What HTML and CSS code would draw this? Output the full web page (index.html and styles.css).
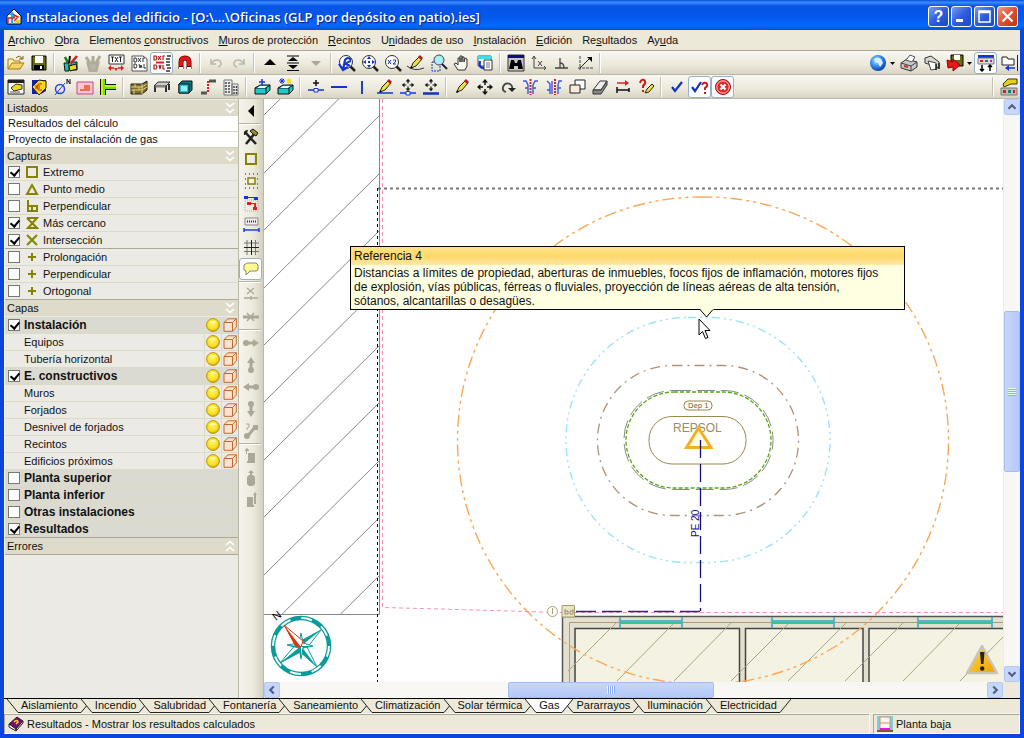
FILE: index.html
```html
<!DOCTYPE html>
<html lang="es">
  <head>
    <meta charset="utf-8" />
    <title>Instalaciones del edificio</title>
    <link rel="stylesheet" href="styles.css" />
  </head>
  <body>
    <svg class="sprite" aria-hidden="true">
      <defs>
        <radialGradient id="gBulb" cx="45%" cy="40%" r="60%">
          <stop offset="0" stop-color="#fff36a" />
          <stop offset="0.7" stop-color="#f8e01c" />
          <stop offset="1" stop-color="#d0a808" />
        </radialGradient>
        <radialGradient id="gGlobe" cx="40%" cy="35%" r="65%">
          <stop offset="0" stop-color="#bfe6ff" />
          <stop offset="0.5" stop-color="#3c96ec" />
          <stop offset="1" stop-color="#0a3fae" />
        </radialGradient>
        <linearGradient id="gWarn" x1="0" y1="0" x2="1" y2="1">
          <stop offset="0" stop-color="#ffd84a" />
          <stop offset="1" stop-color="#f0a000" />
        </linearGradient>
      </defs>
      <symbol id="bulb" viewBox="0 0 14 14">
        <circle cx="7" cy="7" r="6.4" fill="url(#gBulb)" stroke="#b89410" />
        <path d="M3 5Q7 1 11 5Q7 4 3 5" fill="#fffcc8" />
      </symbol>
      <symbol id="cube" viewBox="0 0 14 14">
        <path d="M1 4.500L5 .8H13.300V9L9.500 13.300H1Z" fill="#fbe3d4" />
        <path d="M1 4.500H9.500V13.300H1ZM1 4.500L5 .8H13.300L9.500 4.500M13.300 .8V9L9.500 13.300" fill="none" stroke="#c4692c" />
      </symbol>
      <symbol id="down2" viewBox="0 0 10 12">
        <path d="M1 1L5 4.500L9 1M1 7L5 10.500L9 7" fill="none" stroke="#fff" stroke-width="1.600" />
      </symbol>
      <symbol id="up2" viewBox="0 0 10 12">
        <path d="M1 5L5 1.500L9 5M1 11L5 7.500L9 11" fill="none" stroke="#fff" stroke-width="1.600" />
      </symbol>
      <symbol id="plus" viewBox="0 0 14 14">
        <path d="M7 3V11M3 7H11" stroke="#848400" stroke-width="2" />
      </symbol>
      <symbol id="pencil" viewBox="0 0 20 18">
        <path d="M5 14L7 9L13 3L16 5L10 12Z" fill="#f0e040" stroke="#222" />
        <path d="M12 3L14 1L17 4L15 6Z" fill="#c01818" />
        <path d="M4 15L5 12L7 14Z" fill="#000" />
      </symbol>
      <symbol id="lens" viewBox="0 0 20 18">
        <circle cx="9" cy="8" r="6.500" fill="#fff" stroke="#333" />
        <path d="M13.500 12.500L18 17" stroke="#222" stroke-width="2.500" />
      </symbol>
      <symbol id="cross" viewBox="0 0 20 18">
        <path d="M10 4V7M10 11V14M5 9H8M12 9H15" stroke="#111" stroke-width="1.500" />
        <path d="M10 1L13 4.500H7ZM10 17L13 13.500H7ZM2 9L5.500 6V12ZM18 9L14.500 6V12Z" fill="#111" />
      </symbol>
      <symbol id="arrow" viewBox="0 0 20 18">
        <path d="M5 9H13" stroke="#aaa896" stroke-width="3" />
        <path d="M12 5L18 9L12 13Z" fill="#aaa896" />
        <circle cx="5" cy="9" r="3" fill="#aaa896" />
      </symbol>
      <symbol id="caret" viewBox="0 0 8 18">
        <path d="M1 8H6L3.500 11Z" />
      </symbol>
    </svg>

    <header class="titlebar">
      <svg class="app-icon" viewBox="0 0 16 16">
        <path d="M1 7L8 0L15 7V15H1Z" fill="#fff" stroke="#000" />
        <path d="M5 14V6H3L6 2L9 6H7V14Z" fill="#20b0e0" />
        <path d="M2 14V9H8V6L12 8L8 12" fill="none" stroke="#e02020" stroke-width="1.500" />
        <path d="M9 11H14V14H9Z" fill="#f0d020" />
      </svg>
      <h1>Instalaciones del edificio - [O:\...\Oficinas (GLP por depósito en patio).ies]</h1>
      <div class="window-buttons">
        <button aria-label="Ayuda">?</button>
        <button aria-label="Minimizar"><svg viewBox="0 0 19 19"><path d="M4 12H11V15H4Z" fill="#fff" /></svg></button>
        <button aria-label="Maximizar"><svg viewBox="0 0 19 19"><path d="M4 4H15V15H4ZM4 5.500H15" fill="none" stroke="#fff" stroke-width="1.500" /></svg></button>
        <button class="close" aria-label="Cerrar"><svg viewBox="0 0 19 19"><path d="M4.500 4.500L14.500 14.500M14.500 4.500L4.500 14.500" stroke="#fff" stroke-width="2.200" /></svg></button>
      </div>
    </header>

    <nav class="menu">
      <a href="#"><u>A</u>rchivo</a>
      <a href="#"><u>O</u>bra</a>
      <a href="#">Elementos <u>c</u>onstructivos</a>
      <a href="#"><u>M</u>uros de protección</a>
      <a href="#"><u>R</u>ecintos</a>
      <a href="#">U<u>n</u>idades de uso</a>
      <a href="#"><u>I</u>nstalación</a>
      <a href="#"><u>E</u>dición</a>
      <a href="#">Re<u>s</u>ultados</a>
      <a href="#">Ay<u>u</u>da</a>
    </nav>

    <div class="toolbar">
      <button aria-label="Abrir"><svg viewBox="0 0 20 18"><path d="M2 15V5H7L8 7H14V9" fill="#fff0b0" stroke="#a87c10" /><path d="M2 15L6 9H18L14 15Z" fill="#f8d468" stroke="#a87c10" /><path d="M10 4Q14 0 16 5M17 2V5H13" fill="none" stroke="#805c10" /></svg></button>
      <button aria-label="Guardar"><svg viewBox="0 0 20 18"><path d="M3 2H17V16H3Z" fill="#6b6b10" stroke="#000" /><path d="M6 2H14V9H6Z" fill="#fff" /><path d="M5 11H15V16H5Z" fill="#000" /><path d="M11 12H13V15H11Z" fill="#fff" /></svg></button>
      <span class="sep"></span>
      <button aria-label="Recursos"><svg viewBox="0 0 20 18"><path d="M4 9H9V17H5ZM11 8H17V16H11Z" fill="#20c0b0" stroke="#111" /><path d="M8 9L5 3" stroke="#108020" stroke-width="2.500" /><path d="M9 9L10 2" stroke="#111" stroke-width="2" /><path d="M11 9L17 2" stroke="#d02020" stroke-width="2.500" /><path d="M9 12L16 10L17 15L10 17Z" fill="#e8d820" stroke="#111" /></svg></button>
      <button aria-label="Plantillas"><svg viewBox="0 0 20 18"><path d="M5 9H15L13 17H7ZM7 9L3 3M10 9L10 2M13 9L17 2" fill="#b8b4a4" stroke="#b0ac9c" stroke-width="3" /></svg></button>
      <button aria-label="Textos"><svg viewBox="0 0 20 18"><path d="M3 1H18V10H3Z" fill="#fff" stroke="#333" /><path d="M5 3H8M6.500 3V8M9 3L12 8M12 3L9 8M13 3H16M14.500 3V8" stroke="#222" /><path d="M4 14H8M12 14H16" stroke="#e02020" stroke-width="1.500" /><path d="M2 14L5 11V17ZM18 14L15 11V17ZM10 17L8 14H12Z" fill="#e02020" /></svg></button>
      <button aria-label="Plantilla DXF"><svg viewBox="0 0 20 18"><path d="M3 2H14L18 5V17H3Z" fill="#fff" stroke="#555" /><path d="M5 4V8H7L8 6L7 4ZM9 4L12 8M12 4L9 8M14 8V4H16M5 10V14H7L8 12L7 10ZM10 10L11 14L12 11L13 14M15 10V14H17" fill="none" stroke="#333" /></svg></button>
      <button class="pressed" aria-label="Capas DXF"><svg viewBox="0 0 20 18"><path d="M2 2V6H4L5 4L4 2ZM6 2L9 6M9 2L6 6M11 6V2H13M2 11V15H4L5 13L4 11ZM7 11L8 15L9 11M11 11V15H13" fill="none" stroke="#a02020" stroke-width="1.200" /><path d="M4 8.500H12" stroke="#e02020" stroke-width="2" /><path d="M15 2H19M14 5H18M14 8H18M14 11H18M15 14H19M14 17H18" stroke="#333" stroke-width="1.500" /></svg></button>
      <button aria-label="Imán"><svg viewBox="0 0 20 18"><path d="M6 15V8Q6 4 10 4Q14 4 14 8V15" fill="none" stroke="#600" stroke-width="5" /><path d="M6 12V8Q6 4 10 4Q14 4 14 8V12" fill="none" stroke="#e01818" stroke-width="3.500" /><path d="M4 13H8V15H4ZM12 13H16V15H12Z" fill="#fff" /></svg></button>
      <span class="sep"></span>
      <button aria-label="Deshacer"><svg viewBox="0 0 20 18"><path d="M5 5V10H10M5 10Q9 4 14 7Q17 11 12 13" fill="none" stroke="#bbb8a8" stroke-width="1.500" /></svg></button>
      <button aria-label="Rehacer"><svg viewBox="0 0 20 18"><path d="M15 5V10H10M15 10Q11 4 6 7Q3 11 8 13" fill="none" stroke="#bbb8a8" stroke-width="1.500" /></svg></button>
      <span class="sep"></span>
      <button aria-label="Subir planta"><svg viewBox="0 0 20 18"><path d="M10 5L16 11H4Z" /></svg></button>
      <button aria-label="Ir a planta"><svg viewBox="0 0 20 18"><path d="M4 2H16M4 9H16M4 16.500H16" stroke="#000" stroke-width="1.200" /><path d="M10 3L15 7H5ZM10 15L15 11H5Z" /></svg></button>
      <button aria-label="Bajar planta"><svg viewBox="0 0 20 18"><path d="M5 7H15L10 12Z" fill="#aaa896" /></svg></button>
      <span class="sep"></span>
      <button aria-label="Redibujar"><svg viewBox="0 0 20 18"><use href="#lens" /><path d="M6 16L8 6Q11 2 14 6M14 7Q10 8 9 10L13 12M2 10L6 16L11 13" fill="none" stroke="#1034d0" stroke-width="2.200" /></svg></button>
      <button aria-label="Ver todo"><svg viewBox="0 0 20 18"><use href="#lens" /><path d="M9 2L11 5H7ZM9 14L11 11H7ZM3 8L6 6V10ZM15 8L12 6V10ZM8 7H10V9H8Z" fill="#1034d0" /></svg></button>
      <button aria-label="Ampliar"><svg viewBox="0 0 20 18"><use href="#lens" /><path d="M5 6L8 10M8 6L5 10M10 6H12.500V8L10 10H13" fill="none" stroke="#1034d0" /></svg></button>
      <button aria-label="Dibujar"><svg viewBox="0 0 20 18"><use href="#pencil" /><path d="M1 12Q8 18 18 14" fill="none" stroke="#333" /></svg></button>
      <button aria-label="Ventana"><svg viewBox="0 0 20 18"><path d="M3 8H11V17H3Z" fill="none" stroke="#1034d0" stroke-dasharray="2 1" /><circle cx="10" cy="6" r="5" fill="#a8f0f8" stroke="#444" /><path d="M13 10L18 15" stroke="#222" stroke-width="2" /></svg></button>
      <button aria-label="Desplazar"><svg viewBox="0 0 20 18"><path d="M6 16L2 10L4 9L6 11V4H8V8V2H10V8V3H12V8L13 4L15 5V12L13 16Z" fill="#f8f6f0" stroke="#333" /></svg></button>
      <button aria-label="Vista anterior"><svg viewBox="0 0 20 18"><path d="M3 2H16V12H3Z" fill="#fff" stroke="#555" /><path d="M3 2H16V5H3Z" fill="#48d8e8" /><path d="M9 6H17V16H9Z" fill="#fff" stroke="#333" /><path d="M11 9H15M11 11H15M11 13H15" stroke="#777" /><path d="M5 7Q3 14 9 14" fill="none" stroke="#1034d0" stroke-width="2.500" /></svg></button>
      <span class="sep"></span>
      <button aria-label="Buscar"><svg viewBox="0 0 20 18"><path d="M2 1H18V17H2Z" fill="#c8c8c8" stroke="#333" /><path d="M2 1H18V4H2Z" fill="#101078" /><path d="M5 6H8L9 9H11L12 6H15L17 15H12V12H8V15H3Z" /></svg></button>
      <button aria-label="Coordenadas"><svg viewBox="0 0 20 18"><path d="M5 3V14H17M3 5L5 2L7 5M15 12L17 14L15 16" fill="none" stroke="#444" /><path d="M9 7L13 12M13 7L9 12" stroke="#444" /></svg></button>
      <button aria-label="Ángulo"><svg viewBox="0 0 20 18"><path d="M3 14H16M8 14V4M8 9Q12 9 12 14" fill="none" stroke="#444" stroke-width="1.300" /></svg></button>
      <button aria-label="Polares"><svg viewBox="0 0 20 18"><path d="M5 2V16M3 14H18" stroke="#444" stroke-dasharray="3 1" /><path d="M5 14L15 4" stroke="#222" /><path d="M12 3H17V8Z" /></svg></button>
      <span class="sep"></span>
      <span class="fill"></span>
      <button aria-label="Web"><svg viewBox="0 0 20 18"><circle cx="10" cy="9" r="8" fill="url(#gGlobe)" /><path d="M6 5Q10 2 13 5L15 9L12 13L10 9L7 8Z" fill="#d4f0ff" /></svg></button>
      <button class="drop" aria-label="Más web"><svg viewBox="0 0 8 18"><use href="#caret" /></svg></button>
      <button aria-label="Imprimir"><svg viewBox="0 0 20 18"><path d="M2 9L8 5L18 8V13L12 17L2 14Z" fill="#c8c8c4" stroke="#333" /><path d="M7 6L11 1L16 3L13 8Z" fill="#fff" stroke="#555" /><path d="M2 9L12 12L18 8M12 12V17" fill="none" stroke="#444" /><path d="M5 12L9 13" stroke="#c03030" stroke-width="2" /></svg></button>
      <button aria-label="Imprimir planos"><svg viewBox="0 0 20 18"><path d="M3 4L9 2L17 8V14L12 12L3 9Z" fill="#d8d8d0" stroke="#333" /><path d="M6 7L14 9L15 15L9 16Z" fill="#fff" stroke="#444" /><path d="M14 10V16M17 9V15" stroke="#222" stroke-width="1.500" /></svg></button>
      <button aria-label="Exportar"><svg viewBox="0 0 20 18"><path d="M6 1H18V12H6Z" fill="#6b6b10" stroke="#000" /><path d="M9 1H15V6H9Z" fill="#fff" /><path d="M2 6L8 8V5L15 11L8 17V13L3 14Z" fill="#e81818" stroke="#900" /></svg></button>
      <button class="drop" aria-label="Más exportar"><svg viewBox="0 0 8 18"><use href="#caret" /></svg></button>
      <button class="pressed" aria-label="Barras"><svg viewBox="0 0 20 18"><path d="M2 1H18V4H2Z" fill="#1034d0" /><path d="M2 4H18V10H2Z" fill="#ddd" stroke="#777" /><path d="M4 6H7V8H4Z" fill="#d02020" /><path d="M9 6H12V8H9Z" fill="#108070" /><path d="M14 6H16V8H14Z" fill="#c020c0" /><path d="M6 11V17M4 15L6 17L8 15M14 17V11M12 13L14 11L16 13" fill="none" stroke="#000" stroke-width="1.500" /></svg></button>
      <button aria-label="Restaurar"><svg viewBox="0 0 20 18"><path d="M3 3H8L9 5H15V11H3Z" fill="#fff" stroke="#222" /><path d="M18.500 1V17" stroke="#222" /><path d="M16 14H8" stroke="#1034e0" stroke-width="1.500" /><path d="M6 14L10 11V17Z" fill="#1034e0" /></svg></button>
    </div>

    <div class="toolbar">
      <button aria-label="Datos generales"><svg viewBox="0 0 20 18"><path d="M2 2H18V16H2Z" fill="#fff" stroke="#222" /><path d="M2 2H18V5H2Z" fill="#222" /><path d="M5 10L10 6L16 7V11L8 13Z" fill="#f0d820" stroke="#333" /><path d="M4 14H14" stroke="#555" /></svg></button>
      <button aria-label="Precios"><svg viewBox="0 0 20 18"><path d="M3 2H17V13L12 16H3Z" fill="#1020b0" /><path d="M3 9L10 2L17 3V10L10 17Z" fill="#f4d818" stroke="#222" /><path d="M13 6Q8 5 8 9Q8 13 13 12M6 8H11M6 10H11" fill="none" stroke="#d02020" /></svg></button>
      <button aria-label="Diámetros"><svg viewBox="0 0 20 18"><circle cx="8" cy="11" r="4.500" fill="none" stroke="#2040e0" stroke-width="1.400" /><path d="M3 17L13 5" stroke="#2040e0" /><path d="M15 6V1L18 6V1" fill="none" stroke="#111" /></svg></button>
      <button aria-label="Planta"><svg viewBox="0 0 20 18"><path d="M2 4H18V16H2Z" fill="#f8c8d8" stroke="#c04880" /><path d="M9 7H15V13H5V11H9Z" fill="#f0704c" /></svg></button>
      <button aria-label="Tuberías"><svg viewBox="0 0 20 18"><path d="M5 1V17M7 9H18" stroke="#111" stroke-width="6" /><path d="M5 1V17M7 9H18" stroke="#70e010" stroke-width="4" /><path d="M4 1V17M7 8H18" stroke="#e8f020" stroke-width="1.500" /></svg></button>
      <span class="sep"></span>
      <button aria-label="Muros"><svg viewBox="0 0 20 18"><path d="M2 6H13L18 3V12L13 16H2Z" fill="#807028" stroke="#222" /><path d="M2 9H13L18 6M2 12H13L18 9M6 6V9M10 9V12M5 12V16M13 6V16" fill="none" stroke="#e0d080" /></svg></button>
      <button aria-label="Forjados"><svg viewBox="0 0 20 18"><path d="M2 8L6 4H18L14 8Z" fill="#ccc" stroke="#333" /><path d="M3 8V14M14 8V14M17 6V12" stroke="#333" stroke-width="2" /><path d="M3 9H14" stroke="#777" /></svg></button>
      <button aria-label="Huecos"><svg viewBox="0 0 20 18"><path d="M4 6L7 3H17V12L14 15H4Z" fill="#007888" stroke="#111" /><path d="M4 6H14V15H4Z" fill="#20c0d0" stroke="#111" /><path d="M6 8H12V13H6Z" fill="#90f0f8" /></svg></button>
      <button aria-label="Desniveles"><svg viewBox="0 0 20 18"><path d="M3 15H9M11 3H18" stroke="#555" stroke-width="3" /><path d="M10 3V15" stroke="#e02020" stroke-width="2" stroke-dasharray="2 1" /></svg></button>
      <button aria-label="Edificios"><svg viewBox="0 0 20 18"><path d="M3 2H11V17H3ZM11 6H17V17H11Z" fill="#eee" stroke="#777" /><path d="M5 4V16M8 4V16M13 8V16M15.500 8V16" stroke="#444" stroke-dasharray="2 1" stroke-width="1.500" /></svg></button>
      <span class="sep"></span>
      <button aria-label="Nuevo equipo"><svg viewBox="0 0 20 18"><path d="M3 10L8 7H18V12L14 16H3Z" fill="#20c8c8" stroke="#111" /><path d="M3 10H14L18 7M14 10V16" fill="none" stroke="#111" /><path d="M5 10L8 8H15L13 10Z" fill="#fff" /><path d="M10 1V7M7 4H13" stroke="#1034e0" stroke-width="1.500" /></svg></button>
      <button aria-label="Nuevo depósito"><svg viewBox="0 0 20 18"><path d="M3 10L8 7H18V12L14 16H3Z" fill="#20c8c8" stroke="#111" /><path d="M3 10H14L18 7M14 10V16" fill="none" stroke="#111" /><path d="M5 10L8 8H15L13 10Z" fill="#fff" /><path d="M4 3H10M7 0V6M5 1L9 5M9 1L5 5" stroke="#1034e0" /><circle cx="14" cy="3" r="2.500" fill="#f4e020" /></svg></button>
      <span class="sep"></span>
      <button aria-label="Nuevo punto"><svg viewBox="0 0 20 18"><path d="M2 12H18" stroke="#1034e0" stroke-width="1.500" /><path d="M8 10.500H12V14H8Z" fill="#fff" stroke="#1034e0" /><path d="M10 2V8M7 5H13" stroke="#111" stroke-width="1.500" /></svg></button>
      <button aria-label="Tubería horizontal"><svg viewBox="0 0 20 18"><path d="M2 9H18" stroke="#1034e0" stroke-width="2" /></svg></button>
      <button aria-label="Tubería vertical"><svg viewBox="0 0 20 18"><path d="M10 3V16" stroke="#2440c0" stroke-width="2" /></svg></button>
      <button aria-label="Editar tubería"><svg viewBox="0 0 20 18"><use href="#pencil" /><path d="M2 15H18" stroke="#1034e0" stroke-width="1.500" /></svg></button>
      <button aria-label="Mover punto"><svg viewBox="0 0 20 18"><use href="#cross" height="14" /><path d="M2 15H18" stroke="#1034e0" stroke-width="1.500" /><path d="M8 13.500H12V17H8Z" fill="#fff" stroke="#1034e0" /></svg></button>
      <button aria-label="Mover tubería"><svg viewBox="0 0 20 18"><use href="#cross" height="14" /><path d="M2 15.500H18" stroke="#1034c0" stroke-width="2.500" /></svg></button>
      <span class="sep"></span>
      <button aria-label="Editar"><svg viewBox="0 0 20 18"><use href="#pencil" /></svg></button>
      <button aria-label="Mover"><svg viewBox="0 0 20 18"><use href="#cross" /></svg></button>
      <button aria-label="Girar"><svg viewBox="0 0 20 18"><path d="M8 14Q4 13 5 9Q7 4 12 6Q15 8 14 11" fill="none" stroke="#444" stroke-width="1.800" /><path d="M10 10H18L14 14Z" fill="#222" /></svg></button>
      <button aria-label="Simetría copia"><svg viewBox="0 0 20 18"><path d="M9.500 1V17" stroke="#e02020" stroke-width="2" stroke-dasharray="2 1" /><path d="M2 3H5L7 7V16M4 10H7M17 3H14L12 7V16M15 10H12" fill="none" stroke="#3858e0" stroke-width="1.400" /></svg></button>
      <button aria-label="Simetría mover"><svg viewBox="0 0 20 18"><path d="M11 1V17" stroke="#e02020" stroke-width="2" stroke-dasharray="2 1" /><path d="M3 3L6 6V16M3 12H6M18 3H15L14 7V16M17 10H14M8 3V16" fill="none" stroke="#3858e0" stroke-width="1.400" /></svg></button>
      <button aria-label="Copiar"><svg viewBox="0 0 20 18"><path d="M8 2H18V11H8Z" fill="#fff" stroke="#222" /><path d="M3 7H13V15H3Z" fill="#fce8dc" stroke="#222" /></svg></button>
      <button aria-label="Borrar"><svg viewBox="0 0 20 18"><path d="M3 12L10 3H17L11 12Z" fill="#eee" stroke="#333" /><path d="M3 12L11 12L17 3V7L11 16H3Z" fill="#888" stroke="#333" /></svg></button>
      <button aria-label="Medir"><svg viewBox="0 0 20 18"><path d="M4 5H13" stroke="#e02020" stroke-width="1.500" /><path d="M12 2L16 5L12 8Z" fill="#e02020" /><path d="M4 12H16M4 9V15M16 10V14" stroke="#111" stroke-width="1.500" /></svg></button>
      <button aria-label="Información"><svg viewBox="0 0 20 18"><path d="M4 5Q5 1 8 2Q11 4 7 8V10M7 12V14" fill="none" stroke="#d01818" stroke-width="2" /><path d="M9 15L11 11L16 6L18 8L13 14Z" fill="#f0e040" stroke="#222" /></svg></button>
      <span class="sep"></span>
      <button aria-label="Calcular"><svg viewBox="0 0 20 18"><path d="M5 9L8 13L15 4" fill="none" stroke="#1034c0" stroke-width="2.200" /></svg></button>
      <button class="pressed" aria-label="Resultados"><svg viewBox="0 0 20 18"><path d="M2 9L5 13L11 4" fill="none" stroke="#1034c0" stroke-width="2.200" /><path d="M12 7Q13 4 16 5Q19 7 15 10V12M15 14V16" fill="none" stroke="#d01818" stroke-width="2" /></svg></button>
      <button class="pressed" aria-label="Errores"><svg viewBox="0 0 20 18"><circle cx="10" cy="9" r="7.500" fill="#e02828" stroke="#b00808" /><circle cx="10" cy="9" r="6.200" fill="none" stroke="#fff" stroke-width=".8" /><path d="M7.500 6.500L12.500 11.500M12.500 6.500L7.500 11.500" stroke="#fff" stroke-width="2.200" /></svg></button>
      <span class="fill"></span>
      <span class="sep"></span>
      <button aria-label="Configurar barra"><svg viewBox="0 0 20 18"><path d="M4 6L9 1H18V6H12L5 9Z" fill="#e8d010" stroke="#333" /><path d="M2 10H18V17H2Z" fill="#bbb" stroke="#777" /><path d="M4 12H7V15H4Z" fill="#d02020" /><path d="M9 12H12V15H9Z" fill="#108070" /><path d="M14 12H16V15H14Z" fill="#c02020" /></svg></button>
    </div>

    <main>
      <aside class="sidebar">
        <h2>Listados <svg class="chevron"><use href="#down2" /></svg></h2>
        <div class="reports">
          <a href="#">Resultados del cálculo</a>
          <a href="#">Proyecto de instalación de gas</a>
        </div>

        <h2>Capturas <svg class="chevron"><use href="#down2" /></svg></h2>
        <div class="rows">
          <label class="row"><input type="checkbox" checked /><svg class="snap" viewBox="0 0 14 14"><path d="M2 2H12V12H2Z" /></svg>Extremo</label>
          <label class="row"><input type="checkbox" /><svg class="snap" viewBox="0 0 14 14"><path d="M7 3L12 12H2Z" /></svg>Punto medio</label>
          <label class="row"><input type="checkbox" /><svg class="snap" viewBox="0 0 14 14"><path d="M3 1V12H12V7H3M7 7V12" /></svg>Perpendicular</label>
          <label class="row"><input type="checkbox" checked /><svg class="snap" viewBox="0 0 14 14"><path d="M2 2H12L3 12H12L2 2" /></svg>Más cercano</label>
          <label class="row last"><input type="checkbox" checked /><svg class="snap" viewBox="0 0 14 14"><path d="M2 2L12 12M12 2L2 12" /></svg>Intersección</label>
          <label class="row"><input type="checkbox" /><svg class="snap"><use href="#plus" /></svg>Prolongación</label>
          <label class="row"><input type="checkbox" /><svg class="snap"><use href="#plus" /></svg>Perpendicular</label>
          <label class="row last"><input type="checkbox" /><svg class="snap"><use href="#plus" /></svg>Ortogonal</label>
        </div>

        <h2>Capas <svg class="chevron"><use href="#down2" /></svg></h2>
        <div class="rows layers">
          <div class="row group"><label><input type="checkbox" checked />Instalación</label><button aria-label="Visible"><svg><use href="#bulb" /></svg></button><button aria-label="3D"><svg><use href="#cube" /></svg></button></div>
          <div class="row"><span>Equipos</span><button aria-label="Visible"><svg><use href="#bulb" /></svg></button><button aria-label="3D"><svg><use href="#cube" /></svg></button></div>
          <div class="row"><span>Tubería horizontal</span><button aria-label="Visible"><svg><use href="#bulb" /></svg></button><button aria-label="3D"><svg><use href="#cube" /></svg></button></div>
          <div class="row group"><label><input type="checkbox" checked />E. constructivos</label><button aria-label="Visible"><svg><use href="#bulb" /></svg></button><button aria-label="3D"><svg><use href="#cube" /></svg></button></div>
          <div class="row"><span>Muros</span><button aria-label="Visible"><svg><use href="#bulb" /></svg></button><button aria-label="3D"><svg><use href="#cube" /></svg></button></div>
          <div class="row"><span>Forjados</span><button aria-label="Visible"><svg><use href="#bulb" /></svg></button><button aria-label="3D"><svg><use href="#cube" /></svg></button></div>
          <div class="row"><span>Desnivel de forjados</span><button aria-label="Visible"><svg><use href="#bulb" /></svg></button><button aria-label="3D"><svg><use href="#cube" /></svg></button></div>
          <div class="row"><span>Recintos</span><button aria-label="Visible"><svg><use href="#bulb" /></svg></button><button aria-label="3D"><svg><use href="#cube" /></svg></button></div>
          <div class="row"><span>Edificios próximos</span><button aria-label="Visible"><svg><use href="#bulb" /></svg></button><button aria-label="3D"><svg><use href="#cube" /></svg></button></div>
          <div class="row group"><label><input type="checkbox" />Planta superior</label></div>
          <div class="row group"><label><input type="checkbox" />Planta inferior</label></div>
          <div class="row group"><label><input type="checkbox" />Otras instalaciones</label></div>
          <div class="row group last"><label><input type="checkbox" checked />Resultados</label></div>
        </div>

        <h2 class="closed">Errores <svg class="chevron"><use href="#up2" /></svg></h2>
      </aside>

      <div class="side-tools">
        <button aria-label="Ocultar panel"><svg viewBox="0 0 20 18"><path d="M13 3V15L7 9Z" /></svg></button>
        <hr />
        <button aria-label="Opciones"><svg viewBox="0 0 20 18"><path d="M5 16L14 5M4 4L15 16" stroke="#222" stroke-width="2.500" /><path d="M9 3L12 1L17 5L15 8L12 6Z" fill="#989020" stroke="#111" /><path d="M3 7Q2 2 7 2L6 5L4 7Z" fill="#222" /></svg></button>
        <button aria-label="Capturas"><svg viewBox="0 0 20 18"><path d="M5 4H15V14H5Z" fill="none" stroke="#848400" stroke-width="2" /></svg></button>
        <button aria-label="Rejilla de captura"><svg viewBox="0 0 20 18"><path d="M4 2H18M4 7H18M4 12H18M4 16H18" stroke="#4050e8" stroke-width="1.500" stroke-dasharray="1 3" /><path d="M7 6H14V12H7Z" fill="#f4f2e4" stroke="#848400" stroke-width="1.500" /></svg></button>
        <button aria-label="Referencias"><svg viewBox="0 0 20 18"><path d="M4 6H17V17H4Z" fill="none" stroke="#aaa" stroke-dasharray="1 1" /><path d="M3 2H7V5H3ZM13 3H17V6H13ZM7 3H13V4H7Z" fill="#2030e0" /><path d="M6 8H10V11H6ZM12 13H16V16H12ZM10 9H15V13H13V10H10Z" fill="#e02020" /></svg></button>
        <button aria-label="Cotas"><svg viewBox="0 0 20 18"><path d="M4 2H17V9H4Z" fill="#eee" stroke="#888" /><path d="M6 5.500H15" stroke="#333" stroke-width="2" stroke-dasharray="1 1" /><path d="M3 14H18M3 12V16M18 12V16" stroke="#2040e0" stroke-width="1.500" /></svg></button>
        <button aria-label="Rejilla"><svg viewBox="0 0 20 18"><path d="M6 2V17M14.500 2V17M3 5H18M3 13.500H18" stroke="#777" /><path d="M10.500 2V17M3 9.500H18" stroke="#222" /></svg></button>
        <button class="pressed" aria-label="Ayudas"><svg viewBox="0 0 20 18"><path d="M6 3H15L17 5V10L15 11H9L5 15V11L3 10V5Z" fill="#fffc98" stroke="#888860" /></svg></button>
        <hr />
        <button aria-label="Dividir"><svg viewBox="0 0 20 18"><path d="M6 2L13 8M13 2L6 8M3 12H17M10 10V14" stroke="#aaa896" stroke-width="1.300" /></svg></button>
        <button aria-label="Unir"><svg viewBox="0 0 20 18"><path d="M2 9H18" stroke="#aaa896" stroke-width="3" /><path d="M6 5L13 13M13 5L6 13" stroke="#aaa896" stroke-width="1.500" /></svg></button>
        <hr />
        <button aria-label="Derecha"><svg viewBox="0 0 20 18"><use href="#arrow" /></svg></button>
        <button aria-label="Arriba"><svg class="turn-up" viewBox="0 0 20 18"><use href="#arrow" /></svg></button>
        <button aria-label="Izquierda"><svg class="turn-left" viewBox="0 0 20 18"><use href="#arrow" /></svg></button>
        <button aria-label="Abajo"><svg class="turn-down" viewBox="0 0 20 18"><use href="#arrow" /></svg></button>
        <button aria-label="Conectar"><svg viewBox="0 0 20 18"><path d="M6 15L14 5" stroke="#aaa896" stroke-width="3" /><circle cx="6" cy="14" r="3" fill="#aaa896" /><path d="M12 3H17V8H12Z" fill="#aaa896" /><path d="M5 2H8V5L6 6V8" fill="none" stroke="#aaa896" /></svg></button>
        <hr />
        <button aria-label="Subir tramo"><svg viewBox="0 0 20 18"><path d="M7 5H14V15H6V13H7ZM4 2L6 0L8 2V3H6V6H5V3H4Z" fill="#aaa896" /></svg></button>
        <button aria-label="Tramo central"><svg viewBox="0 0 20 18"><path d="M6 7L8 5H12L14 7V14L12 16H8L6 14ZM9 5V3H7L10 0L13 3H11V5Z" fill="#aaa896" /></svg></button>
        <button aria-label="Bajar tramo"><svg viewBox="0 0 20 18"><path d="M6 5H12V13H13V15H6ZM12 3L14 0L16 3H15V12H13V3Z" fill="#aaa896" /></svg></button>
      </div>

      <div class="view">
        <div class="drawing">
          <svg class="plan" viewBox="264 99 740 583" preserveAspectRatio="xMinYMin slice">
            <clipPath id="plot"><path d="M264 99H379V614H264Z" /></clipPath>
            <g class="line hatch" clip-path="url(#plot)">
              <path d="M264 115L380 0M264 173L380 58M264 230L380 115M264 288L380 173M264 345L380 230M264 402L380 287M264 460L380 345M264 517L380 402M264 575L380 460M264 632L380 517M264 690L380 575" />
            </g>
            <path class="line" d="M379.500 99V614.500H264" stroke="#888" />
            <path class="line" d="M377.500 188V682" stroke="#000" stroke-dasharray="3 3" />
            <path class="line" d="M378 188.500H1004" stroke="#777" stroke-width="2" stroke-dasharray="3 3" />

            <!-- edificio -->
            <path d="M562 616H1004V682H562Z" fill="#e4e0d0" />
            <path class="line" d="M1004 616.500H562.500V682" stroke="#555" stroke-width="1.500" />
            <path class="line" d="M1004 622.500H569.500V682" stroke="#b09878" />
            <g fill="#f4f2e2" stroke="#444" stroke-width="1.500">
              <path d="M575 690V628.500H739.500V690" />
              <path d="M745.500 690V628.500H863V690" />
              <path d="M869 690V628.500H1010V690" />
            </g>
            <path class="line" d="M568 671L616 623M617 681L674 623M674 681L731 623M731 681L789 623M788 681L846 623M845 681L903 623M903 681L960 623M960 681L1004 636" stroke="#a8a880" />
            <g stroke="#60b0c8" stroke-width="2">
              <path d="M620 617V628M682 617V628M772 617V628M834 617V628M918 617V628M992 617V628" />
              <path d="M620 621H682M772 621H834M918 621H992" />
              <path d="M620 623H682M772 623H834M918 623H992" stroke="#30c898" />
            </g>

            <!-- distancias de seguridad -->
            <rect class="line" x="457.500" y="197" width="491" height="487" rx="243" stroke="#f9a858" stroke-width="1.400" stroke-dasharray="12 4 3 4 3 4" />
            <rect class="line" x="566" y="317.500" width="264" height="245" rx="122" stroke="#9ae4fa" stroke-width="1.400" stroke-dasharray="8 4 2 4 2 4" />
            <rect class="line" x="597.500" y="365.500" width="201" height="150" rx="75" stroke="#b09078" stroke-width="1.300" stroke-dasharray="10 5 2 5" />
            <rect class="line" x="624" y="390.500" width="149" height="99" rx="49" stroke="#888" stroke-dasharray="18 6" />
            <rect class="line" x="626" y="392" width="145" height="96" rx="48" stroke="#58a818" stroke-width="1.300" stroke-dasharray="4 2" />
            <rect class="line" x="649" y="416.500" width="97" height="47.500" rx="23" stroke="#9a8850" />
            <rect class="line" x="684" y="401" width="28" height="9" rx="4" stroke="#9a8850" />
            <text x="688" y="408" class="tank-id">Dep 1</text>
            <text x="673" y="432" class="tank-name">REPSOL</text>
            <path class="line" d="M382.500 99V607.500L440 609L560 612.500H1004" stroke="#ff90b4" stroke-dasharray="4 3" />
            <path class="line" d="M576 611.500H700.500" stroke="#28288c" stroke-width="1.500" stroke-dasharray="20 6" />
            <path d="M698.500 428L711 447.500H686.500Z" fill="#fffbdc" stroke="#f4b020" stroke-width="3" />
            <path class="line" d="M700.500 440V611" stroke="#10107c" stroke-width="1.300" stroke-dasharray="18 6" />
            <text class="pipe" transform="translate(699 537) rotate(-90)">PE 20</text>
            <circle cx="552.500" cy="611.500" r="5" fill="#fff" stroke="#b0a078" />
            <path d="M552.500 608V614" stroke="#b0a078" />
            <path d="M562 605.500H574.500V617H562Z" fill="#e8e4c4" stroke="#a89c70" />
            <path d="M565 609V614H568V611H565M573 609V614H570V611H573" fill="none" stroke="#98906c" />

            <!-- rosa de los vientos -->
            <g transform="translate(301 646)">
              <circle r="28" fill="none" stroke="#0a9c9c" stroke-width="4.500" />
              <circle r="28" fill="none" stroke="#fff" stroke-width="2" stroke-dasharray="11 11" />
              <path d="M20 -16L5 3L-21 17L-4 -3Z" fill="#fff" stroke="#0a9c9c" />
              <path d="M20 -16L0 0L-4 -3ZM-21 17L0 0L5 3Z" fill="#0a9c9c" />
              <path d="M0 0L4 -3L16 21L-3 4Z" fill="#fff" stroke="#0a9c9c" />
              <path d="M0 0L16 21L-3 4Z" fill="#0a9c9c" />
              <path d="M0 -13L2 -3L12 0L2 2L0 13L-2 2L-14 -1L-2 -3Z" fill="#fff" stroke="#0a9c9c" />
              <path d="M0 13V0L-14 -1L-2 2ZM0 0L12 0L2 2Z" fill="#0a9c9c" />
              <path d="M-17 -21L2 -5L0 1L-5 0Z" fill="#fff" stroke="#d03c10" />
              <path d="M-17 -21L0 1L-6 0Z" fill="#d03c10" />
            </g>
            <text class="north" transform="translate(276 621) rotate(-38)">N</text>

            <path d="M982 646L997 673H967Z" fill="url(#gWarn)" stroke="#c8c4b8" stroke-width="2.500" stroke-linejoin="round" />
            <path d="M980 652H984.500L983.500 664H981Z" fill="#222" />
            <circle cx="982.200" cy="668.500" r="2.200" fill="#222" />
          </svg>

          <div class="tooltip">
            <h3>Referencia 4</h3>
            <p>Distancias a límites de propiedad, aberturas de inmuebles, focos fijos de inflamación, motores fijos<br />de explosión, vías públicas, férreas o fluviales, proyección de líneas aéreas de alta tensión,<br />sótanos, alcantarillas o desagües.</p>
            <svg class="tail" viewBox="0 0 14 9"><path d="M0 0H14L7 8Z" fill="#ffffe1" /><path d="M0 .5L6.500 8L13 .5" fill="none" stroke="#000" /></svg>
            <svg class="cursor" viewBox="0 0 13 22"><path d="M1 1V17L4.500 13.500L7.500 20.500L10 19.500L7 12.500H12Z" fill="#fff" stroke="#000" /></svg>
          </div>
        </div>

        <div class="scroll vertical">
          <button aria-label="Arriba"><svg viewBox="0 0 16 16"><path d="M4 10L8 6L12 10" /></svg></button>
          <span class="before"></span>
          <div class="thumb"></div>
          <span class="after"></span>
          <button aria-label="Abajo"><svg viewBox="0 0 16 16"><path d="M4 6L8 10L12 6" /></svg></button>
        </div>
        <div class="scroll horizontal">
          <button aria-label="Izquierda"><svg viewBox="0 0 16 16"><path d="M10 4L6 8L10 12" /></svg></button>
          <span class="before"></span>
          <div class="thumb"></div>
          <span class="after"></span>
          <button aria-label="Derecha"><svg viewBox="0 0 16 16"><path d="M6 4L10 8L6 12" /></svg></button>
        </div>
      </div>
    </main>

    <nav class="tabs">
      <svg viewBox="0 0 11 14"><path d="M0 0L11 13.500" /></svg>
      <button>Aislamiento</button>
      <svg viewBox="0 0 11 14"><path d="M0 0L11 13.500M0 13.500L5.500 7" /></svg>
      <button>Incendio</button>
      <svg viewBox="0 0 11 14"><path d="M0 0L11 13.500M0 13.500L5.500 7" /></svg>
      <button>Salubridad</button>
      <svg viewBox="0 0 11 14"><path d="M0 0L11 13.500M0 13.500L5.500 7" /></svg>
      <button>Fontanería</button>
      <svg viewBox="0 0 11 14"><path d="M0 0L11 13.500M0 13.500L5.500 7" /></svg>
      <button>Saneamiento</button>
      <svg viewBox="0 0 11 14"><path d="M0 0L11 13.500M0 13.500L5.500 7" /></svg>
      <button>Climatización</button>
      <svg viewBox="0 0 11 14"><path d="M0 0L11 13.500M0 13.500L5.500 7" /></svg>
      <button>Solar térmica</button>
      <svg viewBox="0 0 11 14"><path class="white" d="M0 0H11V14Z" /><path d="M0 0L11 13.500M0 13.500L5.500 7" /></svg>
      <button class="active">Gas</button>
      <svg viewBox="0 0 11 14"><path class="white" d="M11 0H0V14Z" /><path d="M11 0L0 13.500M11 13.500L5.500 7" /></svg>
      <button>Pararrayos</button>
      <svg viewBox="0 0 11 14"><path d="M0 0L11 13.500M0 13.500L5.500 7" /></svg>
      <button>Iluminación</button>
      <svg viewBox="0 0 11 14"><path d="M0 0L11 13.500M0 13.500L5.500 7" /></svg>
      <button>Electricidad</button>
      <svg viewBox="0 0 11 14"><path d="M11 0L0 13.500" /></svg>
    </nav>

    <footer>
      <div class="status">
        <svg viewBox="0 0 16 16"><path d="M1 8L9 1L15 5L8 13Z" fill="#800878" stroke="#222" /><path d="M1 8L8 13V15L1 11ZM8 13L15 5V7L8 15Z" fill="#fff" stroke="#222" /><path d="M6 6Q9 3 10 6L8 8" fill="none" stroke="#f4e020" stroke-width="1.500" /></svg>
        Resultados - Mostrar los resultados calculados
      </div>
      <div class="status floor">
        <svg viewBox="0 0 16 16"><path d="M0 0H16V16H0Z" fill="#80cce0" /><path d="M3 1H13V14H3Z" fill="#fff4ec" stroke="#c89878" /><path d="M3 7H13" stroke="#c89878" /><path d="M3 13H13" stroke="#f010f0" stroke-width="2" /><path d="M0 15H16" stroke="#805828" stroke-width="2" /></svg>
        Planta baja
      </div>
    </footer>
  </body>
</html>
```

FILE: styles.css
```css
* {
  box-sizing: border-box;
}

body {
  margin: 0;
  height: 100vh;
  display: flex;
  flex-direction: column;
  padding: 0 4px 4px;
  background-color: #0a45dc;
  font-family: "Liberation Sans", Arial, sans-serif;
  font-size: 11px;
  color: #111;
  overflow: hidden;
}

button {
  padding: 0;
  border: none;
  background: none;
  font: inherit;
  color: inherit;
}

a {
  color: inherit;
  text-decoration: none;
}

.sprite {
  position: absolute;
  width: 0;
  height: 0;
}

.titlebar {
  flex: none;
  height: 30px;
  margin: 0 -4px;
  padding: 3px 6px 0;
  display: flex;
  align-items: center;
  gap: 4px;
  background: linear-gradient(#0a50d8, #3a8cfc 8%, #0854e4 20%, #0458ec 55%, #0668ff 85%, #0450d0);
}

.app-icon {
  width: 16px;
  height: 16px;
}

.titlebar h1 {
  flex: 1;
  margin: 0;
  font-family: "Open Sans", "Noto Sans", sans-serif;
  font-size: 13px;
  line-height: 20px;
  font-weight: 600;
  color: #fff;
  text-shadow: 1px 1px 1px #0a1883;
  white-space: nowrap;
}

.window-buttons {
  display: flex;
  gap: 2px;
}

.window-buttons button {
  width: 21px;
  height: 21px;
  border: 1px solid #fff;
  border-radius: 3px;
  background: linear-gradient(135deg, #7a9cf0, #2c5ce0 50%, #1c48c8);
  color: #fff;
  font-size: 16px;
  font-weight: bold;
  line-height: 18px;
}

.window-buttons svg {
  display: block;
  width: 19px;
  height: 19px;
}

.window-buttons .close {
  background: linear-gradient(135deg, #f0a088, #e05030 50%, #c03410);
}

.menu {
  flex: none;
  height: 21px;
  padding-left: 4px;
  display: flex;
  align-items: center;
  gap: 10px;
  background-color: #ece9d8;
  border-bottom: 1px solid #aca899;
  white-space: nowrap;
}

.toolbar {
  flex: none;
  height: 24px;
  display: flex;
  align-items: center;
  background: linear-gradient(#f8f7f1, #ece9dc 60%, #d8d4c4);
  border-bottom: 1px solid #bcb8a8;
}

.toolbar button,
.side-tools button {
  flex: none;
  width: 23px;
  height: 22px;
  display: flex;
  align-items: center;
  justify-content: center;
}

.toolbar svg,
.side-tools svg {
  flex: none;
  width: 20px;
  height: 18px;
}

.toolbar .drop,
.toolbar .drop svg {
  width: 8px;
}

.toolbar .pressed,
.side-tools .pressed {
  border: 1px solid #98b0c8;
  border-radius: 3px;
  background-color: #fff;
}

.sep {
  flex: none;
  width: 8px;
  height: 20px;
  background: linear-gradient(90deg, transparent 3px, #c8c4b4 3px, #c8c4b4 4px, #fff 4px, #fff 5px, transparent 5px);
}

.fill {
  flex: 1;
}

main {
  flex: 1;
  min-height: 0;
  display: flex;
}

.sidebar {
  flex: none;
  width: 235px;
  padding-top: 1px;
  background-color: #ebeae5;
  border-right: 1px solid #bcb8a8;
  border-left: 1px solid #f4f2ea;
}

.sidebar h2 {
  margin: 0;
  height: 16px;
  padding: 0 3px 0 2px;
  display: flex;
  align-items: center;
  justify-content: space-between;
  font-size: 11px;
  font-weight: normal;
  background-color: #dedbca;
}

.sidebar .closed {
  height: 17px;
  border-bottom: 1px solid #aca899;
}

.chevron {
  width: 10px;
  height: 12px;
}

.reports a {
  display: block;
  height: 16px;
  padding-left: 3px;
  line-height: 15px;
  background-color: #fff;
  border-bottom: 1px solid #d4d0c0;
}

.layers {
  padding-top: 1px;
}

.row {
  height: 17px;
  padding-left: 3px;
  display: flex;
  align-items: center;
  border-bottom: 1px solid #dddac8;
}

.row.last {
  border-bottom-color: #aca899;
}

.row label,
.row span {
  flex: 1;
  display: flex;
  align-items: center;
}

.row span {
  padding-left: 16px;
}

.row.group {
  background-color: #dadad0;
}

.group label {
  gap: 4px;
  font-size: 12px;
  line-height: 16px;
  font-weight: bold;
}

.row input {
  appearance: none;
  flex: none;
  width: 12px;
  height: 12px;
  margin: 0;
  border: 1px solid #777;
  background-color: #fff;
}

.row input:checked::after {
  content: "";
  display: block;
  width: 4px;
  height: 7px;
  margin: 0 0 0 3px;
  border: solid #000;
  border-width: 0 2px 2px 0;
  transform: rotate(40deg);
}

.snap {
  width: 14px;
  height: 14px;
  margin: 0 4px 0 5px;
  fill: none;
  stroke: #848400;
  stroke-width: 2;
}

.row button {
  width: 17px;
  height: 16px;
  display: flex;
  align-items: center;
  justify-content: center;
  border-left: 1px solid #dddac8;
}

.row button svg {
  width: 14px;
  height: 14px;
}

.side-tools {
  flex: none;
  width: 25px;
  padding: 1px 0 0;
  background: linear-gradient(90deg, #f6f4ec, #ece9dc 60%, #d4d0c0);
  border-right: 1px solid #bcb8a8;
}

.side-tools hr {
  width: 22px;
  height: 2px;
  margin: 1px 0;
  border: solid #fff;
  border-width: 0 0 1px;
  background-color: #b8b4a4;
}

.turn-up {
  transform: rotate(-90deg);
}

.turn-left {
  transform: rotate(180deg);
}

.turn-down {
  transform: rotate(90deg);
}

.view {
  flex: 1;
  min-width: 0;
  display: grid;
  grid-template-columns: 1fr 17px;
  grid-template-rows: 1fr 16px;
  background-color: #ece9d8;
}

.drawing {
  position: relative;
  min-height: 0;
  overflow: hidden;
  background-color: #fff;
}

.plan {
  display: block;
  width: 100%;
  height: 100%;
}

.line {
  fill: none;
}

.hatch {
  stroke: #888;
}

.tank-id {
  font-family: "DejaVu Sans", sans-serif;
  font-size: 7px;
  fill: #705c28;
}

.tank-name {
  font-size: 12px;
  fill: #9a8c5c;
}

.pipe {
  font-size: 10px;
  fill: #10107c;
}

.north {
  font-size: 11px;
}

.tooltip {
  position: absolute;
  top: 147px;
  left: 86px;
  width: 555px;
  border: 1px solid #000;
  background-color: #ffffe1;
  font-size: 12px;
  line-height: 14px;
  white-space: nowrap;
}

.tooltip h3 {
  margin: 0;
  padding-left: 3px;
  font-size: 12px;
  line-height: 18px;
  font-weight: normal;
  background: linear-gradient(#ffe48c, #ffd868 50%, #ffe8a8);
}

.tooltip p {
  margin: 0;
  padding: 1px 3px;
}

.tail {
  position: absolute;
  top: 100%;
  left: 349px;
  width: 14px;
  height: 9px;
}

.cursor {
  position: absolute;
  top: 71px;
  left: 347px;
  width: 13px;
  height: 22px;
}

.scroll {
  display: flex;
  background-color: #f8f7f4;
}

.vertical {
  flex-direction: column;
  border-left: 1px solid #eeede5;
}

.horizontal {
  grid-row: 2;
}

.scroll button {
  flex: none;
  width: 16px;
  height: 16px;
  border: 1px solid #b4c8f4;
  border-radius: 2px;
  background-color: #c8d6fb;
}

.scroll svg {
  display: block;
  width: 14px;
  height: 14px;
  fill: none;
  stroke: #4d6185;
  stroke-width: 2.5;
}

.thumb {
  display: flex;
  border: 1px solid #a4bcf0;
  border-radius: 2px;
  background: linear-gradient(90deg, #c8d6fb, #b4c8f8);
}

.thumb::after {
  content: "";
  width: 8px;
  height: 8px;
  margin: auto;
  background: repeating-linear-gradient(#eef4fe 0 1px, #8cb0f8 1px 2px);
}

.horizontal .thumb {
  background: linear-gradient(#c8d6fb, #b4c8f8);
}

.horizontal .thumb::after {
  background: repeating-linear-gradient(90deg, #eef4fe 0 1px, #8cb0f8 1px 2px);
}

.vertical .before { flex: 195; }
.vertical .thumb { flex: 159; }
.vertical .after { flex: 193; }
.horizontal .before { flex: 228; }
.horizontal .thumb { flex: 204; }
.horizontal .after { flex: 273; }

.tabs {
  flex: none;
  height: 15px;
  padding-left: 3px;
  display: flex;
  background-color: #ece9d8;
  border-top: 1px solid #000;
}

.tabs button {
  height: 14px;
  padding: 0 3px;
  line-height: 13px;
  border-bottom: 1px solid #222;
}

.tabs .active {
  background-color: #fff;
}

.tabs svg {
  flex: none;
  width: 11px;
  height: 14px;
  fill: none;
  stroke: #222;
}

.tabs .white {
  fill: #fff;
  stroke: none;
}

footer {
  flex: none;
  height: 21px;
  display: flex;
  gap: 3px;
  background-color: #ece9d8;
  border-top: 1px solid #f8f7f0;
}

.status {
  flex: 1;
  padding-left: 3px;
  display: flex;
  align-items: center;
  gap: 3px;
  border: 1px solid #aca899;
  border-right-color: #fff;
  border-bottom-color: #fff;
}

.status svg {
  width: 16px;
  height: 16px;
}

.floor {
  flex: 0 0 147px;
}
```
